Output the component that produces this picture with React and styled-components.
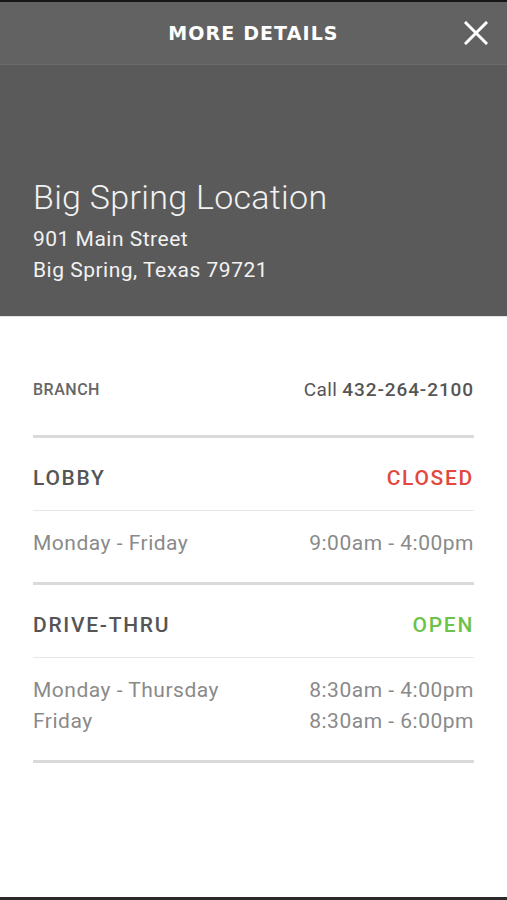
import React from 'react'
import styled, {createGlobalStyle} from 'styled-components'

const Global = createGlobalStyle`
  html, body {
    margin: 0;
    padding: 0;
    background: #fff;
  }
  body {
    font-family: Roboto, "Liberation Sans", sans-serif;
  }
`

const Screen = styled.main`
  min-height: 100vh;
  box-sizing: border-box;
  border-top: 2px solid #161616;
  border-bottom: 3px solid #2a2a2a;
  display: flex;
  flex-direction: column;
`

const TopBar = styled.header`
  height: 62px;
  background: #626262;
  border-bottom: 1px solid #6b6b6b;
  display: flex;
  align-items: center;
  justify-content: center;
  position: relative;
`

const BarTitle = styled.h1`
  margin: 0;
  color: #fff;
  font-family: "DejaVu Sans", sans-serif;
  font-weight: 600;
  font-size: 19px;
  letter-spacing: 1.1px;
`

const CloseButton = styled.button`
  position: absolute;
  right: 18px;
  top: 18px;
  width: 26px;
  height: 26px;
  padding: 0;
  border: none;
  background: none;
  display: flex;
  align-items: center;
  justify-content: center;
`

const Hero = styled.section`
  height: 252px;
  background: #5a5a5a;
  border-bottom: 1px solid #e2e2e2;
  box-sizing: border-box;
  padding: 0 33px 30px;
  display: flex;
  flex-direction: column;
  justify-content: flex-end;
  color: #f2f2f2;
`

const PlaceName = styled.h2`
  margin: 0 0 7px;
  font-weight: 300;
  font-size: 34px;
  line-height: 40px;
  letter-spacing: 0.3px;
`

const AddressLine = styled.div`
  font-size: 21px;
  line-height: 31px;
  letter-spacing: 0.5px;
`

const Content = styled.div`
  padding: 0 33px;
`

const BranchRow = styled.div`
  display: flex;
  justify-content: space-between;
  align-items: center;
  padding: 61px 0 33px;
  line-height: 24px;
`

const BranchLabel = styled.span`
  font-size: 16px;
  font-weight: 500;
  letter-spacing: 0.5px;
  color: #666;
`

const Phone = styled.span`
  font-size: 19px;
  letter-spacing: 0.4px;
  color: #555;
  & b {
    font-weight: 500;
    letter-spacing: 0.9px;
  }
`

const Divider = styled.hr`
  margin: 0;
  border: none;
  height: ${p => (p.thin ? '1px' : '3px')};
  background: ${p => (p.thin ? '#e8e8e8' : '#dadada')};
`

const SectionHead = styled.div`
  display: flex;
  justify-content: space-between;
  align-items: center;
  padding: 26px 0 18px;
  line-height: 28px;
  font-size: 21px;
  font-weight: 500;
  letter-spacing: 1.7px;
`

const SectionName = styled.span`
  color: #555;
`

const Status = styled.span`
  color: ${p => (p.open ? '#6cc24a' : '#e2483d')};
`

const Hours = styled.div`
  display: grid;
  grid-template-columns: 1fr auto;
  padding: 17px 0 23px;
  font-size: 21px;
  line-height: 31px;
  letter-spacing: 0.5px;
  color: #8a8a8a;
`

const Time = styled.span`
  text-align: right;
`

const sections = [
  {
    name: 'LOBBY',
    open: false,
    hours: [['Monday - Friday', '9:00am - 4:00pm']],
  },
  {
    name: 'DRIVE-THRU',
    open: true,
    hours: [
      ['Monday - Thursday', '8:30am - 4:00pm'],
      ['Friday', '8:30am - 6:00pm'],
    ],
  },
]

const App = () => {
  return (
    <>
      <Global />
      <Screen>
        <TopBar>
          <BarTitle>MORE DETAILS</BarTitle>
          <CloseButton aria-label="Close">
            <svg width="24" height="24" viewBox="0 0 24 24">
              <path d="M2 2 L22 22 M22 2 L2 22" stroke="#fff" strokeWidth="3" strokeLinecap="square" fill="none" />
            </svg>
          </CloseButton>
        </TopBar>
        <Hero>
          <PlaceName>Big Spring Location</PlaceName>
          <AddressLine>901 Main Street</AddressLine>
          <AddressLine>Big Spring, Texas 79721</AddressLine>
        </Hero>
        <Content>
          <BranchRow>
            <BranchLabel>BRANCH</BranchLabel>
            <Phone>Call <b>432-264-2100</b></Phone>
          </BranchRow>
          <Divider />
          {sections.map(s => (
            <React.Fragment key={s.name}>
              <SectionHead>
                <SectionName>{s.name}</SectionName>
                <Status open={s.open}>{s.open ? 'OPEN' : 'CLOSED'}</Status>
              </SectionHead>
              <Divider thin />
              <Hours>
                {s.hours.map(([day, time]) => (
                  <React.Fragment key={day}>
                    <span>{day}</span>
                    <Time>{time}</Time>
                  </React.Fragment>
                ))}
              </Hours>
              <Divider />
            </React.Fragment>
          ))}
        </Content>
      </Screen>
    </>
  )
}

export default App
